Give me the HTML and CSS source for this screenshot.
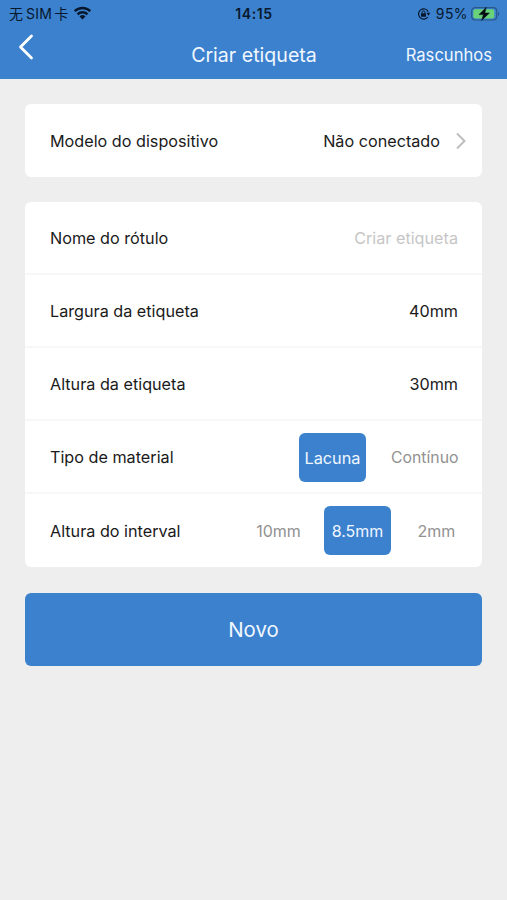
FILE: index.html
```html
<!DOCTYPE html>
<html lang="pt">
<head>
    <meta charset="UTF-8">
    <meta name="viewport" content="width=device-width, initial-scale=1.0">
    <title>Criar etiqueta</title>
    <link rel="stylesheet" href="styles.css">
</head>
<body>

<header class="header">
    <div class="status">
        <div class="carrier">
            <span class="cjk">无</span><span class="sim">SIM</span><span class="cjk">卡</span>
            <svg class="wifi" width="19" height="14" viewBox="0 0 18 14">
                <path d="M1.2 5.2a11.2 11.2 0 0 1 15.6 0M4 8.3a7.2 7.2 0 0 1 10 0" fill="none" stroke="#07182c" stroke-width="2.4"/>
                <path d="M9 13.6 6 10.5a4.3 4.3 0 0 1 6 0z" fill="#07182c"/>
            </svg>
        </div>
        <span class="time">14:15</span>
        <div class="power">
            <svg class="lock" width="14" height="12" viewBox="0 0 14 12">
                <path d="M11.2 3.6A5.1 5.1 0 1 0 10.8 9" fill="none" stroke="#07182c" stroke-width="1.2"/>
                <path d="M9.4 4.8h3.8l-1.6 3z" fill="#07182c"/>
                <rect x="4" y="5.3" width="5" height="3.5" rx=".5" fill="#07182c"/>
                <path d="M5.1 5.5V4.3a1.4 1.4 0 0 1 2.8 0v1.2" fill="none" stroke="#07182c"/>
            </svg>
            <span class="percent">95%</span>
            <svg class="battery" width="29" height="16" viewBox="0 0 29 16">
                <rect x=".7" y="1.6" width="25" height="12.4" rx="3.4" fill="none" stroke="#285789" stroke-width="1.2"/>
                <rect x="2.3" y="3.2" width="21" height="9.2" rx="2" fill="#69d278"/>
                <path d="M27 5.7v4.2a2.3 2.3 0 0 0 0-4.2z" fill="#285789"/>
                <path d="M15.2 1.4 8 8.6h4.4L10.6 14.4l7.8-7.4h-4.6z" fill="#050b12" stroke="#050b12" stroke-width=".5"/>
            </svg>
        </div>
    </div>
    <nav class="nav">
        <svg class="back" width="16" height="26" viewBox="0 0 16 26">
            <path d="M13.5 2 2.5 13l11 11" fill="none" stroke="#fff" stroke-width="2.8" stroke-linecap="round" stroke-linejoin="round"/>
        </svg>
        <h1 class="title">Criar etiqueta</h1>
        <a class="drafts">Rascunhos</a>
    </nav>
</header>

<main class="content">
    <section class="card">
        <div class="row device">
            <span class="label">Modelo do dispositivo</span>
            <span class="value connection">Não conectado</span>
            <svg class="arrow" width="12" height="18" viewBox="0 0 12 18">
                <path d="m2 1.5 7.5 7.5L2 16.5" fill="none" stroke="#bdbdbd" stroke-width="2"/>
            </svg>
        </div>
    </section>

    <section class="card">
        <div class="row">
            <span class="label">Nome do rótulo</span>
            <span class="value placeholder">Criar etiqueta</span>
        </div>
        <div class="row">
            <span class="label">Largura da etiqueta</span>
            <span class="value">40mm</span>
        </div>
        <div class="row">
            <span class="label">Altura da etiqueta</span>
            <span class="value">30mm</span>
        </div>
        <div class="row">
            <span class="label">Tipo de material</span>
            <span class="option selected">Lacuna</span>
            <span class="option material">Contínuo</span>
        </div>
        <div class="row interval">
            <span class="label">Altura do interval</span>
            <span class="option">10mm</span>
            <span class="option selected">8.5mm</span>
            <span class="option">2mm</span>
        </div>
    </section>

    <button class="button">Novo</button>
</main>

</body>
</html>
```
FILE: styles.css
```css
body {
    margin: 0;
    min-height: 100vh;
    background: #eeeeee;
    font-family: Inter, "Noto Sans CJK SC", sans-serif;
    font-size: 16.2px;
    color: #1a1a1a;
}
.header {
    height: 79px;
    background: #3c81ce;
}
.status {
    display: grid;
    grid-template-columns: 1fr auto 1fr;
    align-items: center;
    height: 27px;
    padding: 0 7px 0 9px;
    font-size: 14px;
    color: #07182c;
}
.carrier {
    display: flex;
    align-items: center;
}
.cjk {
    margin-top: -2px;
    font-family: "Noto Sans CJK SC", sans-serif;
    font-size: 14px;
    line-height: 26px;
}
.sim {
    margin: 0 2px 0 3px;
    letter-spacing: 0.3px;
}
.wifi {
    margin: -1px 0 0 5px;
}
.time {
    margin-right: 1px;
    font-weight: 600;
    font-size: 14px;
    letter-spacing: 0.6px;
}
.power {
    display: flex;
    justify-content: flex-end;
    align-items: center;
}
.percent {
    margin: 0 3px 0 5px;
    letter-spacing: 0.4px;
}
.nav {
    display: grid;
    grid-template-columns: 1fr auto 1fr;
    align-items: center;
    height: 52px;
    padding: 0 15px 0 16px;
    color: #f0f7ff;
}
.back {
    margin: -12px 0 0 2px;
}
.title {
    margin: 3px 0 0;
    font-size: 19.6px;
    font-weight: 400;
}
.drafts {
    margin-top: 4px;
    text-align: right;
    font-size: 16.6px;
}
.content {
    display: flex;
    flex-direction: column;
    padding: 25px 25px 0;
}
.card {
    margin-bottom: 24.5px;
    background: #fff;
    border-radius: 6px;
}
.row {
    display: flex;
    align-items: center;
    box-sizing: border-box;
    height: 73.1px;
    padding: 0 24px 0 25px;
}
.row:not(:last-child) {
    box-shadow: inset 0 -2px #f7f7f7;
}
.label {
    margin-right: auto;
}
.device {
    padding-right: 15px;
}
.arrow {
    margin-left: 15px;
}
.placeholder {
    color: #c6c6c6;
}
.interval {
    padding-right: 12px;
}
.option {
    width: 67px;
    height: 49px;
    margin-left: 13px;
    border-radius: 6px;
    font-size: 16px;
    line-height: 50px;
    text-align: center;
    color: #919191;
}
.option.material {
    margin-left: 25px;
    font-size: 15.8px;
}
.option.selected {
    background: #3c81ce;
    font-size: 16.3px;
    color: #f0f7ff;
}
.interval .option {
    margin-left: 12px;
}
.interval .selected {
    font-size: 16px;
}
.button {
    height: 73px;
    margin-top: 1px;
    border: none;
    border-radius: 6px;
    background: #3c81ce;
    font-family: inherit;
    font-size: 20.4px;
    color: #f0f7ff;
}
```
